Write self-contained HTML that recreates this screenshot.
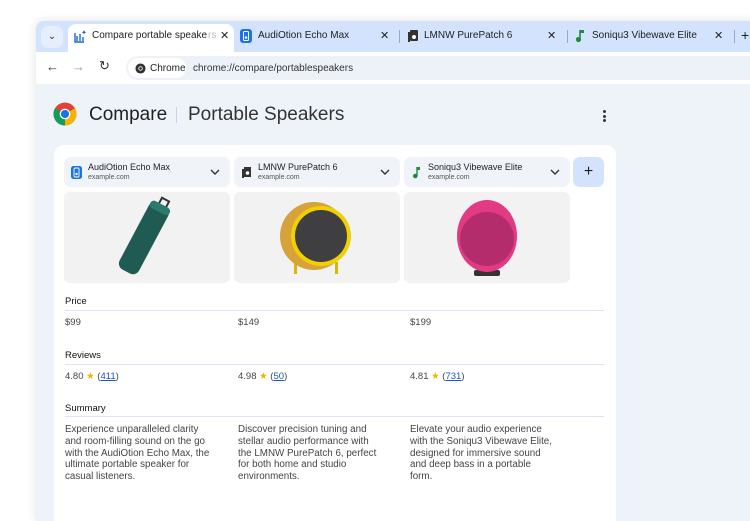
<!DOCTYPE html>
<html><head><meta charset="utf-8"><style>
*{box-sizing:border-box;margin:0;padding:0}
body{width:750px;height:500px;overflow:hidden;background:#fff;font-family:"Liberation Sans",sans-serif;position:relative}
.win{position:absolute;left:36px;top:21px;width:730px;height:500px;border-radius:8px 0 0 0;background:#eef3fa;box-shadow:0 0 10px rgba(0,0,0,.12);overflow:hidden}
.strip{position:absolute;left:0;top:0;right:0;height:31px;background:#d3e3fd}
.dd{position:absolute;left:5px;top:5px;width:22px;height:22px;border-radius:7px;background:#e6eefb;font-size:10px;text-align:center;line-height:22px;color:#333}
.tab{position:absolute;top:0;height:31px;font-size:10px;color:#1f1f1f;line-height:29px}
.tab.act{background:#fff;border-radius:8px 8px 0 0;top:3px;height:28px;line-height:24px}
.x{position:absolute;font-size:11px;color:#222}
.sep{position:absolute;top:9px;width:1px;height:13px;background:#9aa8c0}
.tool{position:absolute;left:0;right:0;top:31px;height:32px;background:#fff}
.omni{position:absolute;left:90px;top:4px;width:640px;height:24px;background:#edf1f8;border-radius:12px}
.chip{position:absolute;left:2px;top:2px;height:20px;width:58px;background:#fff;border-radius:10px;font-size:10px;line-height:21px;padding-left:22px;color:#222}
.url{position:absolute;left:67px;top:7px;font-size:10px;color:#333}
.card{position:absolute;left:18px;top:124px;width:562px;height:400px;background:#fff;border-radius:10px}
.hd{position:absolute;top:12px;height:30px;width:166px;background:#f0f4f9;border-radius:7px}
.hd b{position:absolute;left:24px;top:5px;font-size:9px;font-weight:normal;color:#1f1f1f}
.hd i{position:absolute;left:24px;top:17px;font-size:7px;font-style:normal;color:#555}
.hd .ch{position:absolute;right:10px;top:10px}
.img{position:absolute;top:47px;height:91px;width:166px;background:#f2f2f3;border-radius:6px;overflow:hidden}
.lab{position:absolute;left:11px;font-size:9.5px;color:#111}
.line{position:absolute;left:11px;width:539px;height:1px;background:#dbe5f5}
.v{position:absolute;font-size:9.5px;color:#444}
.v a{color:#1a56c9;text-decoration:underline}
.st{color:#f2b400}
.sum{position:absolute;font-size:9.8px;color:#444;line-height:11.8px;width:165px;white-space:nowrap}
</style></head><body>
<div class="win">
 <div class="strip">
  <div class="dd">&#8964;</div>
  <div class="tab act" style="left:32px;width:166px">
   <svg style="position:absolute;left:6px;top:6px" width="13" height="13" viewBox="0 0 13 13"><path d="M1 3v9h9M3 11V6M6 11V4M9 11V7" stroke="#1a66d2" stroke-width="1.4" fill="none"/><path d="M10 0l.7 1.6 1.6.7-1.6.7L10 4.6 9.3 3 7.7 2.3l1.6-.7z" fill="#1a66d2"/></svg>
   <span style="position:absolute;left:24px">Compare portable speake</span><span style="position:absolute;left:140px;color:#bbb">rs</span>
   <span class="x" style="left:148px;top:0;background:#fff;padding-left:4px">&#10005;</span>
  </div>
  <svg style="position:absolute;left:204px;top:8px" width="12" height="14"><rect x="0" y="0" width="12" height="14" rx="3" fill="#1a73e8"/><rect x="3.5" y="2.5" width="5" height="9" rx="1" fill="none" stroke="#fff"/><circle cx="6" cy="8.5" r="1.3" fill="#fff"/></svg>
  <div class="tab" style="left:222px">AudiOtion Echo Max</div>
  <span class="x" style="left:344px;top:8px">&#10005;</span>
  <div class="sep" style="left:363px"></div>
  <svg style="position:absolute;left:372px;top:9px" width="10" height="12"><rect x="2" y="0" width="8" height="11" rx="1" fill="#333"/><rect x="0" y="2" width="2" height="10" fill="#333"/><circle cx="6" cy="7" r="2" fill="#fff"/></svg>
  <div class="tab" style="left:388px">LMNW PurePatch 6</div>
  <span class="x" style="left:511px;top:8px">&#10005;</span>
  <div class="sep" style="left:531px"></div>
  <svg style="position:absolute;left:539px;top:8px" width="10" height="14"><path d="M5 1v9" stroke="#1e8e3e" stroke-width="1.6"/><path d="M5 1h4v3H5z" fill="#1e8e3e"/><circle cx="3.5" cy="10.5" r="2.6" fill="#1e8e3e"/></svg>
  <div class="tab" style="left:556px">Soniqu3 Vibewave Elite</div>
  <span class="x" style="left:678px;top:8px">&#10005;</span>
  <div class="sep" style="left:698px"></div>
  <span class="x" style="left:705px;top:6px;font-size:14px">+</span>
 </div>
 <div class="tool">
  <span style="position:absolute;left:10px;top:7px;font-size:13px;color:#333">&#8592;</span>
  <span style="position:absolute;left:36px;top:7px;font-size:13px;color:#999">&#8594;</span>
  <span style="position:absolute;left:63px;top:6px;font-size:13px;color:#333">&#8635;</span>
  <div class="omni"><div class="chip"><svg style="position:absolute;left:7px;top:5px" width="11" height="11" viewBox="0 0 12 12"><circle cx="6" cy="6" r="5.5" fill="#333"/><circle cx="6" cy="6" r="2.4" fill="#fff"/><circle cx="6" cy="6" r="1.5" fill="#333"/></svg>Chrome</div><div class="url">chrome://compare/portablespeakers</div></div>
 </div>
 <svg style="position:absolute;left:17px;top:81px" width="24" height="24" viewBox="0 0 24 24"><circle cx="12" cy="12" r="11.5" fill="#db4437"/><path d="M12 12L22 6.3A11.5 11.5 0 0 1 12 23.5z" fill="#f4b400"/><path d="M12 12L12 23.5A11.5 11.5 0 0 1 2 6.3z" fill="#0f9d58"/><circle cx="12" cy="12" r="5.3" fill="#fff"/><circle cx="12" cy="12" r="4.1" fill="#1a73e8"/></svg>
 <div style="position:absolute;left:53px;top:83px;font-size:19px;color:#1f1f1f">Compare</div>
 <div style="position:absolute;left:140px;top:86px;width:1px;height:16px;background:#c8d3e3"></div>
 <div style="position:absolute;left:152px;top:83px;font-size:19px;color:#333">Portable Speakers</div>
 <div style="position:absolute;left:567px;top:89px;width:3px">
  <div style="width:3px;height:3px;border-radius:2px;background:#333;margin-bottom:1.5px"></div><div style="width:3px;height:3px;border-radius:2px;background:#333;margin-bottom:1.5px"></div><div style="width:3px;height:3px;border-radius:2px;background:#333"></div></div>
 <div class="card">
  <div class="hd" style="left:10px"><svg style="position:absolute;left:7px;top:9px" width="11" height="13"><rect width="11" height="13" rx="2.5" fill="#1a73e8"/><rect x="3" y="2" width="5" height="9" rx="1" fill="none" stroke="#fff" stroke-width=".9"/><circle cx="5.5" cy="8" r="1.2" fill="#fff"/></svg><b>AudiOtion Echo Max</b><i>example.com</i><svg class="ch" width="10" height="10"><path d="M1 3l4 4 4-4" stroke="#333" stroke-width="1.4" fill="none"/></svg></div>
  <div class="hd" style="left:180px"><svg style="position:absolute;left:8px;top:10px" width="9" height="11"><rect x="2" width="7" height="10" fill="#333"/><rect y="2" width="2" height="9" fill="#333"/><circle cx="5.5" cy="6" r="1.8" fill="#fff"/></svg><b>LMNW PurePatch 6</b><i>example.com</i><svg class="ch" width="10" height="10"><path d="M1 3l4 4 4-4" stroke="#333" stroke-width="1.4" fill="none"/></svg></div>
  <div class="hd" style="left:350px"><svg style="position:absolute;left:8px;top:9px" width="9" height="13"><path d="M5 1v9" stroke="#1e8e3e" stroke-width="1.4"/><path d="M5 1h3v3H5z" fill="#1e8e3e"/><circle cx="3.3" cy="10" r="2.3" fill="#1e8e3e"/></svg><b>Soniqu3 Vibewave Elite</b><i>example.com</i><svg class="ch" width="10" height="10"><path d="M1 3l4 4 4-4" stroke="#333" stroke-width="1.4" fill="none"/></svg></div>
  <div style="position:absolute;left:519px;top:12px;width:31px;height:30px;background:#d3e3fd;border-radius:7px;text-align:center;line-height:30px;font-size:16px;color:#1f1f1f">+</div>
  <div class="img" style="left:10px"><svg width="166" height="91"><g transform="rotate(28 80 46)"><rect x="69" y="8" width="22" height="76" rx="7" fill="#1f5b52"/><rect x="69" y="8" width="22" height="8" rx="4" fill="#2a7a70"/><path d="M77 8V2h8v6" stroke="#333" stroke-width="2" fill="none"/></g></svg></div>
  <div class="img" style="left:180px"><svg width="166" height="91"><rect x="60" y="70" width="3" height="12" fill="#d8b800"/><rect x="101" y="70" width="3" height="12" fill="#d8b800"/><circle cx="80" cy="44" r="34" fill="#d7a23a"/><circle cx="87" cy="44" r="30" fill="#f0d000"/><circle cx="87" cy="44" r="26" fill="#3f3f42"/></svg></div>
  <div class="img" style="left:350px"><svg width="166" height="91"><rect x="70" y="78" width="26" height="6" rx="2" fill="#333"/><ellipse cx="83" cy="44" rx="30" ry="36" fill="#e23a83"/><circle cx="83" cy="47" r="27" fill="#b52c6d"/></svg></div>
  <div class="lab" style="top:151px">Price</div><div class="line" style="top:165px"></div>
  <div class="v" style="left:11px;top:172px">$99</div><div class="v" style="left:184px;top:172px">$149</div><div class="v" style="left:356px;top:172px">$199</div>
  <div class="lab" style="top:205px">Reviews</div><div class="line" style="top:219px"></div>
  <div class="v" style="left:11px;top:226px">4.80 <span class="st">★</span> (<a>411</a>)</div>
  <div class="v" style="left:184px;top:226px">4.98 <span class="st">★</span> (<a>50</a>)</div>
  <div class="v" style="left:356px;top:226px">4.81 <span class="st">★</span> (<a>731</a>)</div>
  <div class="lab" style="top:258px">Summary</div><div class="line" style="top:271px"></div>
  <div class="sum" style="left:11px;top:279px">Experience unparalleled clarity<br>and room-filling sound on the go<br>with the AudiOtion Echo Max, the<br>ultimate portable speaker for<br>casual listeners.</div>
  <div class="sum" style="left:184px;top:279px">Discover precision tuning and<br>stellar audio performance with<br>the LMNW PurePatch 6, perfect<br>for both home and studio<br>environments.</div>
  <div class="sum" style="left:356px;top:279px">Elevate your audio experience<br>with the Soniqu3 Vibewave Elite,<br>designed for immersive sound<br>and deep bass in a portable<br>form.</div>
 </div>
</div>
</body></html>
